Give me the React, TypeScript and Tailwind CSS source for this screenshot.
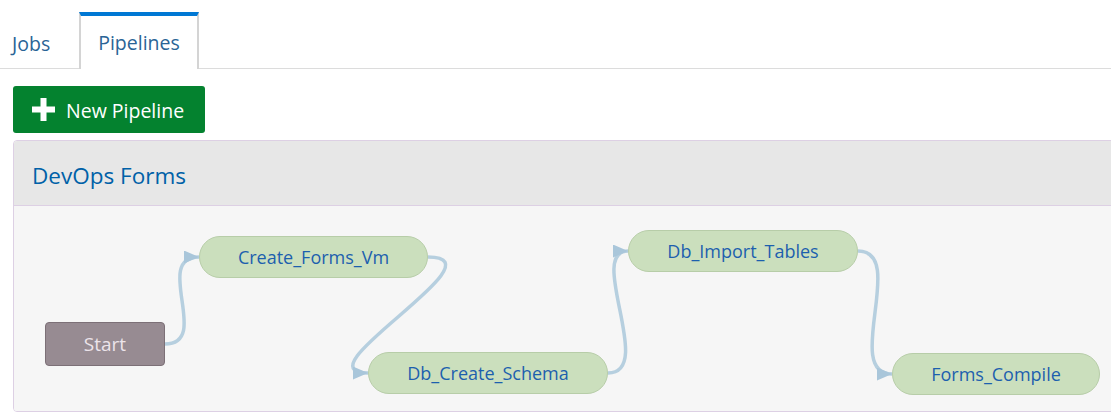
type Node = { id: string; label: string; x: number; y: number; w: number; kind?: 'start' };

// positions are relative to the canvas (panel body)
const NODES: Node[] = [
  { id: 'start', label: 'Start', x: 31, y: 116, w: 120, kind: 'start' },
  { id: 'vm', label: 'Create_Forms_Vm', x: 185, y: 30, w: 229 },
  { id: 'schema', label: 'Db_Create_Schema', x: 354, y: 146, w: 240 },
  { id: 'tables', label: 'Db_Import_Tables', x: 614, y: 24, w: 230 },
  { id: 'compile', label: 'Forms_Compile', x: 878, y: 147, w: 208 },
];

const EDGES = [
  'M151 138 C198 138, 138 51, 185 51',
  'M414 51 C492 51, 282 167, 354 167',
  'M594 167 C642 167, 572 45, 614 45',
  'M844 45 C894 45, 828 168, 878 168',
];

function PipelineNode({ node }: { node: Node }) {
  if (node.kind === 'start') {
    return (
      <div
        className="absolute h-[44px] rounded-[4px] border border-[#7c7077] bg-[#978b92] text-[#ece4ea] text-[19px] flex items-center justify-center"
        style={{ left: node.x, top: node.y, width: node.w }}
      >
        {node.label}
      </div>
    );
  }
  return (
    <div
      className="absolute h-[42px] rounded-full border border-[#b7cda8] bg-[#cbdfbd] text-[#1d5fae] text-[18px] flex items-center justify-center"
      style={{ left: node.x, top: node.y, width: node.w }}
    >
      {node.label}
    </div>
  );
}

export default function App() {
  return (
    <div className="w-[1111px] h-[419px] overflow-hidden bg-white font-['Open_Sans',sans-serif]">
      <div className="flex pt-[12px] border-b border-[#dcdcdc] h-[69px]">
        <button className="w-[79px] h-[56px] mt-[4px] text-[19.5px] text-[#2a6496] text-left pl-[12px]">Jobs</button>
        <button className="w-[120px] h-[57px] bg-white border-t-4 border-t-[#0078d4] border-x-2 border-x-[#d4d4d4] text-[19.5px] text-[#2a6496] mb-[-1px]">
          Pipelines
        </button>
      </div>

      <button className="ml-[13px] mt-[17px] w-[192px] h-[47px] rounded-[3px] bg-[#04822f] text-white text-[19.5px] flex items-center gap-[11px] pl-[19px] pt-[2px]">
        <svg width="23" height="23" viewBox="0 0 23 23" className="mt-[-2px]">
          <rect x="8.5" y="0" width="6" height="23" fill="#fff" />
          <rect x="0" y="8.5" width="23" height="6" fill="#fff" />
        </svg>
        New Pipeline
      </button>

      <div className="ml-[13px] mt-[7px] w-[1120px] rounded-[4px] border border-[#ddd0e4] overflow-hidden">
        <div className="h-[65px] bg-[#e7e7e7] border-b border-[#ddd0e4] flex items-center pl-[18px] pt-[6px] text-[22.5px] text-[#0061a8]">
          DevOps Forms
        </div>
        <div className="relative h-[205px] bg-[#f6f6f6]">
          <svg className="absolute inset-0" width="1120" height="205">
            <defs>
              <marker
                id="arrow"
                viewBox="0 0 15 13"
                refX="15"
                refY="6.5"
                markerWidth="15"
                markerHeight="13"
                markerUnits="userSpaceOnUse"
                orient="auto"
              >
                <path d="M0 0 L15 6.5 L0 13 Z" fill="#a9c6da" />
              </marker>
            </defs>
            {EDGES.map((d) => (
              <path key={d} d={d} fill="none" stroke="#b6cfdf" strokeWidth={3.5} markerEnd="url(#arrow)" />
            ))}
          </svg>
          {NODES.map((node) => (
            <PipelineNode key={node.id} node={node} />
          ))}
        </div>
      </div>
    </div>
  );
}
